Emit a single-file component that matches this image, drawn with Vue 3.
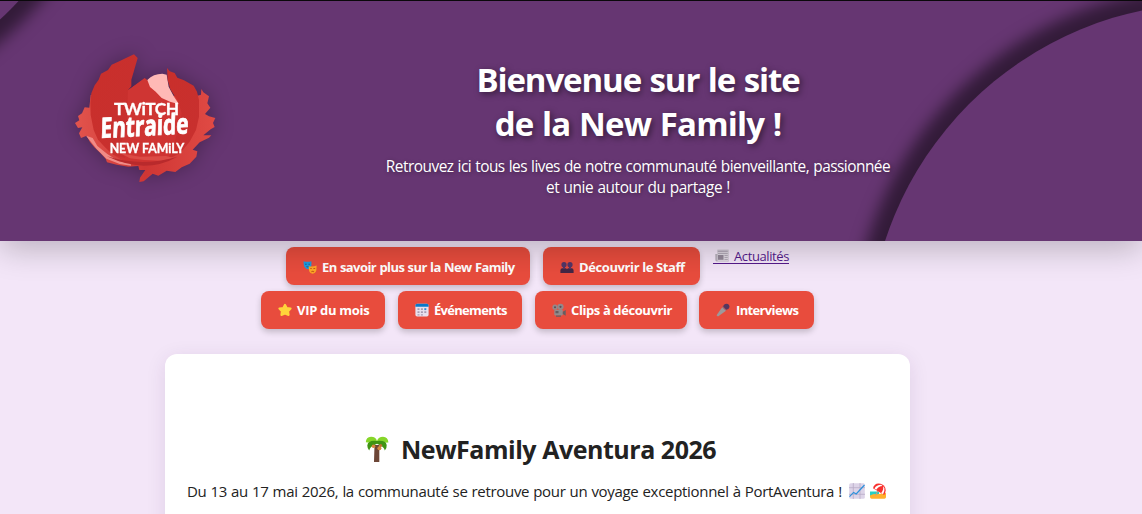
<script setup>
const rows = [
  [
    { icon: 'masks', label: 'En savoir plus sur la New Family', cls: 'w-more' },
    { icon: 'people', label: 'Découvrir le Staff', cls: 'w-staff' },
    { icon: 'news', label: 'Actualités', link: true },
  ],
  [
    { icon: 'star', label: 'VIP du mois', cls: 'w-vip' },
    { icon: 'calendar', label: 'Événements', cls: 'w-events' },
    { icon: 'camera', label: 'Clips à découvrir', cls: 'w-clips' },
    { icon: 'mic', label: 'Interviews', cls: 'w-talks' },
  ],
]
</script>

<template>
  <div class="page">
    <header class="hero">
      <span class="orb orb-left"></span>
      <span class="orb orb-right"></span>
      <svg class="logo" viewBox="0 0 510 480" role="img" aria-label="Twitch Entraide New Family">
        <defs>
          <linearGradient id="petal" x1="0" y1="0" x2="1" y2="1">
            <stop offset="0" stop-color="#c92f2b" />
            <stop offset="1" stop-color="#c8302f" />
          </linearGradient>
          <linearGradient id="brush" x1="0" y1="0" x2="1" y2="0">
            <stop offset="0" stop-color="#e2544d" />
            <stop offset=".5" stop-color="#cf3634" />
            <stop offset="1" stop-color="#e04a44" />
          </linearGradient>
          <clipPath id="disc"><path d="M85 200H110L205 150 254 114 340 180 425 190V385H85Z" /></clipPath>
        </defs>
        <path fill="url(#brush)" d="M92 165 L88 203 74 202 66 220 54 228 58 241 45 249 54 264 67 262 57 280 63 294 80 287 90 306 103 322 121 339 137 356 141 367 170 374 205 380 235 378 238 390 256 390 240 413 238 426 251 424 278 401 295 407 320 392 346 396 365 382 389 371 409 350 412 334 398 329 419 307 447 293 454 286 430 286 452 268 464 261 459 249 466 234 447 229 435 222 451 203 442 190 447 169 430 157 424 147 423 164 410 168Z" />
        <path fill="#f18b87" d="M78 287 98 294 112 318 142 342 176 364 212 370 213 377 179 372 139 356 110 327Z" />
        <circle cx="253" cy="224" r="151" fill="#cf3432" clip-path="url(#disc)" />
        <path fill="#cf3533" d="M204 151 254 116 270 142 288 156 305 174 331 188 362 187 365 217 350 248 310 290 292 305 235 303 202 286Z" />
        <path fill="#ffb9b6" d="M262 120Q280 101 307 101L320 104 326 140 342 170 357 193 330 185 305 174 287 155 270 141Z" />
        <path fill="url(#petal)" d="M222 43 198 54 181 62 155 74 144 90 123 101 116 119 104 136 94 160 91 188 92 225 101 270 114 299 135 322 160 345 196 354 180 315 200 270 204 151 214 139 214 119 222 92 233 54Z" />
        <path fill="url(#petal)" d="M321 84 329 94 344 99 352 113 372 121 401 137 411 155 417 180 417 230 408 270 389 305 360 340 325 357 345 302 360 245 365 220 354 184 331 148 323 120Z" />
        <path fill="#dc4b45" d="M181 340 240 350 318 348 342 354 304 362 252 360 210 355Z" />
        <path fill="#b92a2c" d="M141 349Q245 382 352 350Q305 377 251 377Q193 375 141 349Z" />
        <g class="logo-words">
          <text x="162" y="225" font-size="52" textLength="195" lengthAdjust="spacing">TWiTCH</text>
          <g class="script">
            <text transform="translate(121 294) rotate(-3) skewX(-5)" font-size="84" textLength="264" lengthAdjust="spacingAndGlyphs">Entraide</text>
          </g>
          <text x="149" y="339" font-size="37" textLength="224" lengthAdjust="spacing">NEW FAMiLY</text>
        </g>
      </svg>
      <div class="intro">
        <h1><span class="t1">Bienvenue sur le site</span><br /><span class="t2">de la New Family !</span></h1>
        <p><span class="s1">Retrouvez ici tous les lives de notre communauté bienveillante, passionnée</span><br /><span class="s2">et unie autour du partage !</span></p>
      </div>
    </header>

    <main>
      <nav>
        <div v-for="(row, r) in rows" :key="r" class="row">
          <a v-for="item in row" :key="item.label" :class="item.link ? 'plain' : ['btn', item.cls]">
            <svg class="ico" viewBox="0 0 14 14" aria-hidden="true">
              <g v-if="item.icon === 'masks'">
                <path fill="#1e9be0" d="M.5 1.3Q4.5 2.4 8.4 1.2V5.5Q7.8 9 4.9 9.2 1.3 8.6.8 5Z" />
                <path fill="#176b9e" d="M2 3.7h1.8v1H2zM5.4 3.7h1.6v1H5.4zM3.1 6.2h3q-.3 1.4-1.5 1.4T3.1 6.2" />
                <path fill="#ffa726" d="M5.7 6.2Q9.7 7.2 13.6 5.6L13.4 10Q12.7 13.4 9.7 13.7 6.3 13.3 5.9 9.8Z" />
                <path fill="#c45b19" d="M7.1 8.2h1.8v.9H7.1zM10.4 8h1.8v.9h-1.8zM8.1 11.8q1.6-2 3.2 0l-.5.4q-1-.8-2.2 0z" />
              </g>
              <g v-else-if="item.icon === 'people'" fill="#533566">
                <circle cx="4" cy="4.7" r="2.6" /><circle cx="10" cy="4.7" r="2.6" />
                <path fill="#432746" d="M.4 13V10.2Q.6 8.5 2.3 8.3H5.7Q7 8.5 7 9.5 7 8.5 8.3 8.3H11.7Q13.4 8.5 13.6 10.2V13Z" />
                <path d="M3 7h2v2H3zM9 7h2v2H9z" />
              </g>
              <g v-else-if="item.icon === 'news'">
                <path fill="#b9b1bd" d="M2.5.8H13.6V12.6H1.7Q.3 12.3.3 10.8V5H2.5Z" />
                <path fill="#ded8e1" d="M2.5.8H13.6V11.6Q13.2 12.6 12 12.6H2.5Z" />
                <path fill="#b5abba" d="M2.8 1.5h10v1.6h-10z" />
                <path fill="#938898" d="M3 6h5.5v4.8H3z" />
                <path stroke="#aaa0ae" stroke-width=".8" d="M3 4.5h9.8M9.5 6.5h3.3M9.5 8.5h3.3M9.5 10.5h3.3" />
              </g>
              <path v-else-if="item.icon === 'star'" fill="#ffd43b" stroke="#ffd43b" stroke-width="2" stroke-linejoin="round" d="M7 1.8 8.7 5 12.6 5.5 10.1 8.2 10.6 12 7 10.6 3.4 12 3.9 8.2 1.4 5.5 5.3 5Z" />
              <g v-else-if="item.icon === 'calendar'">
                <rect x=".4" y=".8" width="13.2" height="12.8" rx="1.8" fill="#e8e1ed" />
                <path fill="#0878c9" d="M.4 3.8V2.4Q.5.8 2 .8H12Q13.5.8 13.6 2.4V3.8Z" />
                <path fill="#a79cb1" d="M2.5 5.2h2v1.9h-2zm3.4 0h2v1.9h-2zm-3.4 3h2v1.9h-2zm3.4 0h2v1.9h-2zm3.4 0h2v1.9h-2zm-3.4 3h2v1.4h-2zm-3.4 0h2v1.4h-2z" />
                <path fill="#318bd2" d="M9.3 5.2h2v1.9h-2z" />
              </g>
              <g v-else-if="item.icon === 'camera'">
                <circle cx="3" cy="4.2" r="2.6" fill="#93898b" /><circle cx="8.5" cy="3.8" r="3.1" fill="#93898b" />
                <circle cx="3" cy="4.2" r="1" fill="#5b5057" /><circle cx="8.5" cy="3.8" r="1.1" fill="#5b5057" />
                <rect x="2.3" y="6.8" width="8.5" height="5.7" rx="1" fill="#928b8d" />
                <path fill="#665e61" d="M10.8 8.7 13.7 7V12.7L10.8 11ZM3.5 8h3v2.2h-3zM4 12.5h5v1.2H4z" />
              </g>
              <g v-else>
                <path fill="#9c999b" d="M.5 12.2 6.2 4.2 10 7.8 2 13.6Z" />
                <path fill="#55375f" d="M7.2 3.6Q7.8.8 10.6.8 13.5 1.2 13.5 4 13 6.6 10.2 6.8Z" />
                <path stroke="#776784" stroke-width="1" d="M6.5 3.8 10.2 7.4" />
              </g>
            </svg>
            <span class="label">{{ item.label }}</span>
          </a>
        </div>
      </nav>

      <section class="card">
        <h2>
          <svg class="palm" viewBox="0 0 24 27" aria-hidden="true">
            <path fill="#6d4637" d="M9.5 9h4.8V26H9Z" />
            <path fill="#86d629" d="M.8 6.2Q1 1.1 6 .8 10.7.7 12 5 13.5.8 18 .8 23 1.2 23.4 6.4L15 7H7Z" />
            <path fill="#3f9413" d="M11.9 5Q3 4 2.3 9.5 2.4 13 4.2 14.4 5.2 10.8 9 9.2L12 7.7 15 9.2Q19 11 19.8 14.4 22 12.3 21.7 9 20.8 4 11.9 5Z" />
            <circle cx="8.5" cy="10.2" r="1.8" fill="#d5873a" /><circle cx="14.4" cy="12.2" r="2" fill="#d5873a" /><circle cx="15.7" cy="9.5" r="1.5" fill="#bf702d" />
          </svg>
          <span class="h">NewFamily Aventura 2026</span>
        </h2>
        <p class="lead">
          <span class="l">Du 13 au 17 mai 2026, la communauté se retrouve pour un voyage exceptionnel à PortAventura !</span>
          <svg class="emo first" viewBox="0 0 16 16" aria-hidden="true">
            <rect x=".2" y=".2" width="15.6" height="15.6" rx="1.5" fill="#ddd4e8" />
            <path fill="none" stroke="#b9acc7" stroke-width=".8" d="M4.3 0V16M11 0V16M0 4.7H16M0 11.3H16" />
            <path fill="none" stroke="#2c91dc" stroke-width="1.2" d="M.5 13.7 4.6 9.4 7.2 11 15.5 2" />
          </svg>
          <svg class="emo" viewBox="0 0 16 16" aria-hidden="true">
            <path fill="#27cfc4" d="M0 8.5H9V13H0Z" />
            <path fill="#ffb02e" d="M0 12.4Q4 10.8 7 11.2L16 10V14.3Q15.8 15.7 14.5 15.7H1.5Q.1 15.5 0 14Z" />
            <path stroke="#c79a83" stroke-width="1" d="m8.5 6.5-3 6" />
            <path fill="#f8312f" d="M3 5.2Q4.2.6 8.5.5 12.8.6 15 4.2 16.6 7.8 14.2 12Z" />
            <path fill="#fff" d="M4.5 5.5Q6.5 1.8 11.2 1.8L12.4 3Q8.5 3 6.2 6.8ZM11.2 10Q14 6.5 13 3.2L14.4 5Q15 8.5 13 11.2Z" />
          </svg>
        </p>
      </section>
    </main>
  </div>
</template>

<style>
html, body { margin: 0; overflow: hidden; background: #f3e6f8; }
</style>

<style scoped>
.page { height: 514px; overflow: hidden; background: #f3e6f8; font-family: "Open Sans", "Noto Sans", sans-serif; color: #222; }
.hero { position: relative; z-index: 2; box-sizing: border-box; height: 241px; border-top: 1px solid #0a080b; background: #663672; display: flex; box-shadow: 0 8px 30px rgba(0, 0, 0, .23); clip-path: inset(0 0 -40px 0); }
.orb { position: absolute; inset: 0; overflow: hidden; }
.orb::before { content: ""; position: absolute; width: 690px; height: 690px; border-radius: 50%; background: #663672; box-shadow: 0 0 15px 17px rgba(0, 0, 0, .5); }
.orb-left::before { left: -579px; top: -580px; }
.orb-right::before { left: 868px; top: 2px; }
.logo { position: relative; flex: none; width: 170px; height: 160px; margin: 39px 0 0 60px; filter: drop-shadow(0 0 10px rgba(0, 0, 0, .3)); }
.logo-words { fill: #fff; stroke: #fff; stroke-width: 1px; font-family: Lato, sans-serif; font-weight: 700; }
.script { font-family: "Open Sans", sans-serif; font-weight: 700; stroke-width: 2.5px; }
.intro { position: relative; width: 520px; margin: 57px 0 0 148px; text-align: center; color: #fff; white-space: nowrap; }
h1 { margin: 0; font-size: 33px; line-height: 44px; font-weight: 700; text-shadow: 2px 2px 6px rgba(0, 0, 0, .5); }
.t1 { letter-spacing: -1.1px; word-spacing: 1px; }
.t2 { letter-spacing: -.85px; word-spacing: 1px; }
.intro p { margin: 10px 0 0; font-size: 15.4px; line-height: 21px; text-shadow: 1px 1px 4px rgba(0, 0, 0, .4); }
.s1 { letter-spacing: -.5px; word-spacing: .5px; }
.s2 { letter-spacing: -.4px; word-spacing: .5px; }
main { width: 745px; margin-left: 165px; }
nav { display: flex; flex-direction: column; gap: 6px; padding-top: 6px; }
.row { display: flex; justify-content: center; gap: 13px; height: 38px; }
.btn { box-sizing: border-box; display: flex; align-items: center; height: 38px; padding-left: 17px; border-radius: 8px; background: #e84c3d; color: #fff; font-size: 13px; font-weight: 700; white-space: nowrap; box-shadow: 0 3px 6px rgba(0, 0, 0, .2); }
.row:first-child .btn { padding-top: 2px; }
.ico { flex: none; width: 14px; height: 14px; margin-right: 5px; }
.label { letter-spacing: -.4px; }
.w-more { width: 244px; }
.w-more .label { letter-spacing: -.58px; word-spacing: .5px; }
.w-staff { width: 157px; }
.w-vip { width: 124px; }
.w-vip .label { letter-spacing: -.3px; }
.w-events { width: 124px; }
.w-events .label { letter-spacing: -.7px; }
.w-clips { width: 152px; }
.w-clips .label { letter-spacing: -.4px; }
.w-talks { width: 115px; margin-left: -1px; }
.w-talks .label { margin-left: 1px; letter-spacing: -.65px; }
.plain { box-sizing: border-box; width: 76px; height: 16px; margin-top: 1px; display: flex; align-items: center; border-bottom: 1px solid #551a8b; color: #551a8b; font-size: 13px; white-space: nowrap; }
.plain .ico { margin: 0 5px 0 2px; }
.plain .label { padding-top: 1px; }
.card { box-sizing: border-box; height: 200px; margin-top: 25px; padding-top: 74px; border-radius: 12px; background: #fff; box-shadow: 0 4px 20px rgba(60, 20, 80, .1); }
h2 { display: flex; align-items: center; height: 42px; margin: 0; padding-left: 200px; font-size: 25px; font-weight: 700; white-space: nowrap; letter-spacing: -.47px; }
.palm { width: 24px; height: 27px; margin-right: 12px; }
.lead { display: flex; align-items: center; height: 22px; margin: 10px 0 0; padding-left: 22px; font-size: 15px; white-space: nowrap; letter-spacing: -.31px; word-spacing: .45px; }
.emo { flex: none; width: 16px; height: 16px; margin-left: 5px; }
.emo.first { margin-left: 7px; }
</style>
